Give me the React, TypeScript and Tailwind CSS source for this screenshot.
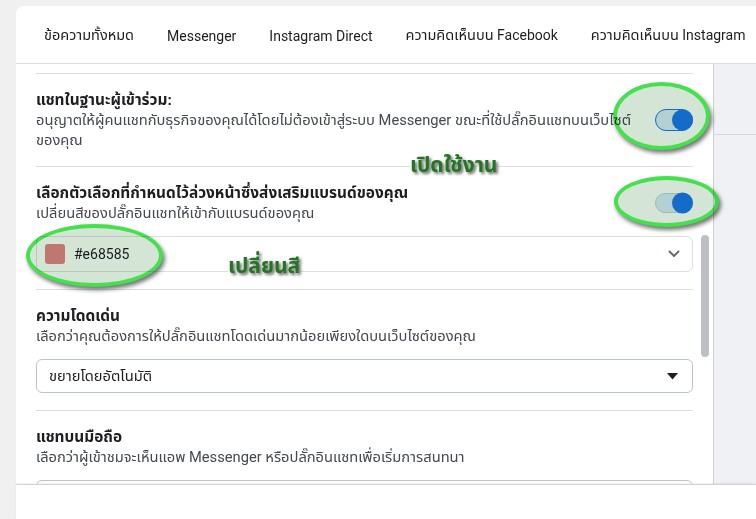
import type { ReactNode } from 'react';

export default function App() {
    return (
        <div className="relative h-[519px] w-[756px] overflow-hidden bg-[#f0f0f0] pl-4 pt-1.5 font-['Roboto','Noto_Sans_Thai','Noto_Sans',sans-serif] text-[#1c1e21]">
            <div className="flex h-full flex-col rounded-tl-lg bg-white">
                {/* tabs */}
                <div className="flex h-[58px] shrink-0 items-center gap-[33px] border-b border-[#dadde1] pt-[3px] pl-7 text-[14px] whitespace-nowrap">
                    <div><Th>ข้อความทั้งหมด</Th></div>
                    <div>Messenger</div>
                    <div>Instagram Direct</div>
                    <div><Th>ความคิดเห็นบน</Th> Facebook</div>
                    <div><Th>ความคิดเห็นบน</Th> Instagram</div>
                </div>

                <div className="flex min-h-0 flex-1">
                    <div className="relative min-w-0 flex-1 overflow-hidden px-5 pt-[9px]">
                        <Section
                            title="แชทในฐานะผู้เข้าร่วม:"
                            desc={
                                <>
                                    อนุญาตให้ผู้คนแชทกับธุรกิจของคุณได้โดยไม่ต้องเข้าสู่ระบบ Messenger ขณะที่ใช้ปลั๊กอินแชทบนเว็บไซต์
                                    <br />
                                    ของคุณ
                                </>
                            }
                            right={<Toggle focused />}
                        />

                        <Section
                            title="เลือกตัวเลือกที่กำหนดไว้ล่วงหน้าซึ่งส่งเสริมแบรนด์ของคุณ"
                            desc="เปลี่ยนสีของปลั๊กอินแชทให้เข้ากับแบรนด์ของคุณ"
                            right={<Toggle />}
                        >
                            <div className="mt-[13px] mb-px flex h-9 items-center rounded-md border border-[#dddfe2] pr-3 pl-2">
                                <div className="h-5 w-5 rounded-[3px] bg-[#e68585]" />
                                <div className="ml-[9px] flex-1 text-[14px]">#e68585</div>
                                <svg width="12" height="8" viewBox="0 0 12 8" fill="none">
                                    <path d="M1.5 1.5 6 6l4.5-4.5" stroke="#606770" strokeWidth="1.8" strokeLinecap="round" strokeLinejoin="round" />
                                </svg>
                            </div>
                        </Section>

                        <Section title="ความโดดเด่น" desc="เลือกว่าคุณต้องการให้ปลั๊กอินแชทโดดเด่นมากน้อยเพียงใดบนเว็บไซต์ของคุณ">
                            <div className="mt-[13px] mb-px flex h-[34px] items-center rounded-md border border-[#bec3c9] pr-3.5 pl-3">
                                <div className="flex-1 text-[14.7px]">ขยายโดยอัตโนมัติ</div>
                                <svg width="11" height="7" viewBox="0 0 11 7">
                                    <path d="M0 0h11L5.5 6.5z" fill="#1c1e21" />
                                </svg>
                            </div>
                        </Section>

                        <Section title="แชทบนมือถือ" desc="เลือกว่าผู้เข้าชมจะเห็นแอพ Messenger หรือปลั๊กอินแชทเพื่อเริ่มการสนทนา">
                            <div className="mt-[13px] h-9 rounded-md border border-[#bec3c9]" />
                        </Section>

                        {/* scrollbar thumb */}
                        <div className="absolute top-[171px] right-1 h-[122px] w-2 rounded-full bg-[#bcc0c4]" />
                    </div>

                    <div className="w-[43px] shrink-0 border-l border-[#ccd0d5] bg-[#f0f1f5]">
                        <div className="h-[71px] border-b border-[#d5d8dd]" />
                    </div>
                </div>

                {/* footer */}
                <div className="h-[35px] shrink-0 border-t border-[#cfd2d6] bg-white shadow-[0_-1px_2px_rgba(0,0,0,0.06)]" />
            </div>

            {/* annotations */}
            <Ring className="top-[82px] left-[613px] h-[68px] w-[97px]" />
            <Ring className="top-[176px] left-[614px] h-[51px] w-[105px]" />
            <Ring className="top-[224px] left-[26px] h-[63px] w-[137px]" />

            <Label className="top-[150px] left-[410px]">เปิดใช้งาน</Label>
            <Label className="top-[251px] left-[228px]">เปลี่ยนสี</Label>
        </div>
    );
}

function Th({ children }: { children: ReactNode }) {
    return <span className="text-[14.5px]">{children}</span>;
}

function Section({ title, desc, right, children }: { title: string; desc: ReactNode; right?: ReactNode; children?: ReactNode }) {
    return (
        <div className="border-t border-[#dadde1] pt-4 pb-4">
            <div className="flex items-center gap-4">
                <div className="min-w-0 flex-1">
                    <div className="text-[15.4px] leading-5 font-bold">{title}</div>
                    <div className="text-[14.7px] leading-5 whitespace-nowrap text-[#444950]">{desc}</div>
                </div>
                {right}
            </div>
            {children}
        </div>
    );
}

function Toggle({ focused }: { focused?: boolean }) {
    return (
        <div
            className={
                focused
                    ? 'relative h-[22px] w-[38px] shrink-0 rounded-full border border-[#1877f2] bg-[#d6e8fd]'
                    : 'relative h-5 w-[38px] shrink-0 rounded-full border border-[#c4ccd4] bg-[#d6e8fd]'
            }
        >
            <div className="absolute top-1/2 right-[-1px] h-[21px] w-[21px] -translate-y-1/2 rounded-full bg-[#1877f2]" />
        </div>
    );
}

function Ring({ className }: { className: string }) {
    return (
        <div
            className={
                'pointer-events-none absolute rounded-[50%] border-4 border-[#45e04d] bg-[#d5e5d5] mix-blend-multiply shadow-[2px_3px_4px_rgba(0,0,0,0.55)] ' +
                className
            }
        />
    );
}

function Label({ className, children }: { className: string; children: ReactNode }) {
    return (
        <div
            className={
                "pointer-events-none absolute text-[21px] leading-[30px] font-bold text-[#237524] [-webkit-text-stroke:3px_white] [paint-order:stroke_fill] [text-shadow:2px_2px_3px_rgba(0,0,0,0.6)] " +
                className
            }
        >
            {children}
        </div>
    );
}
